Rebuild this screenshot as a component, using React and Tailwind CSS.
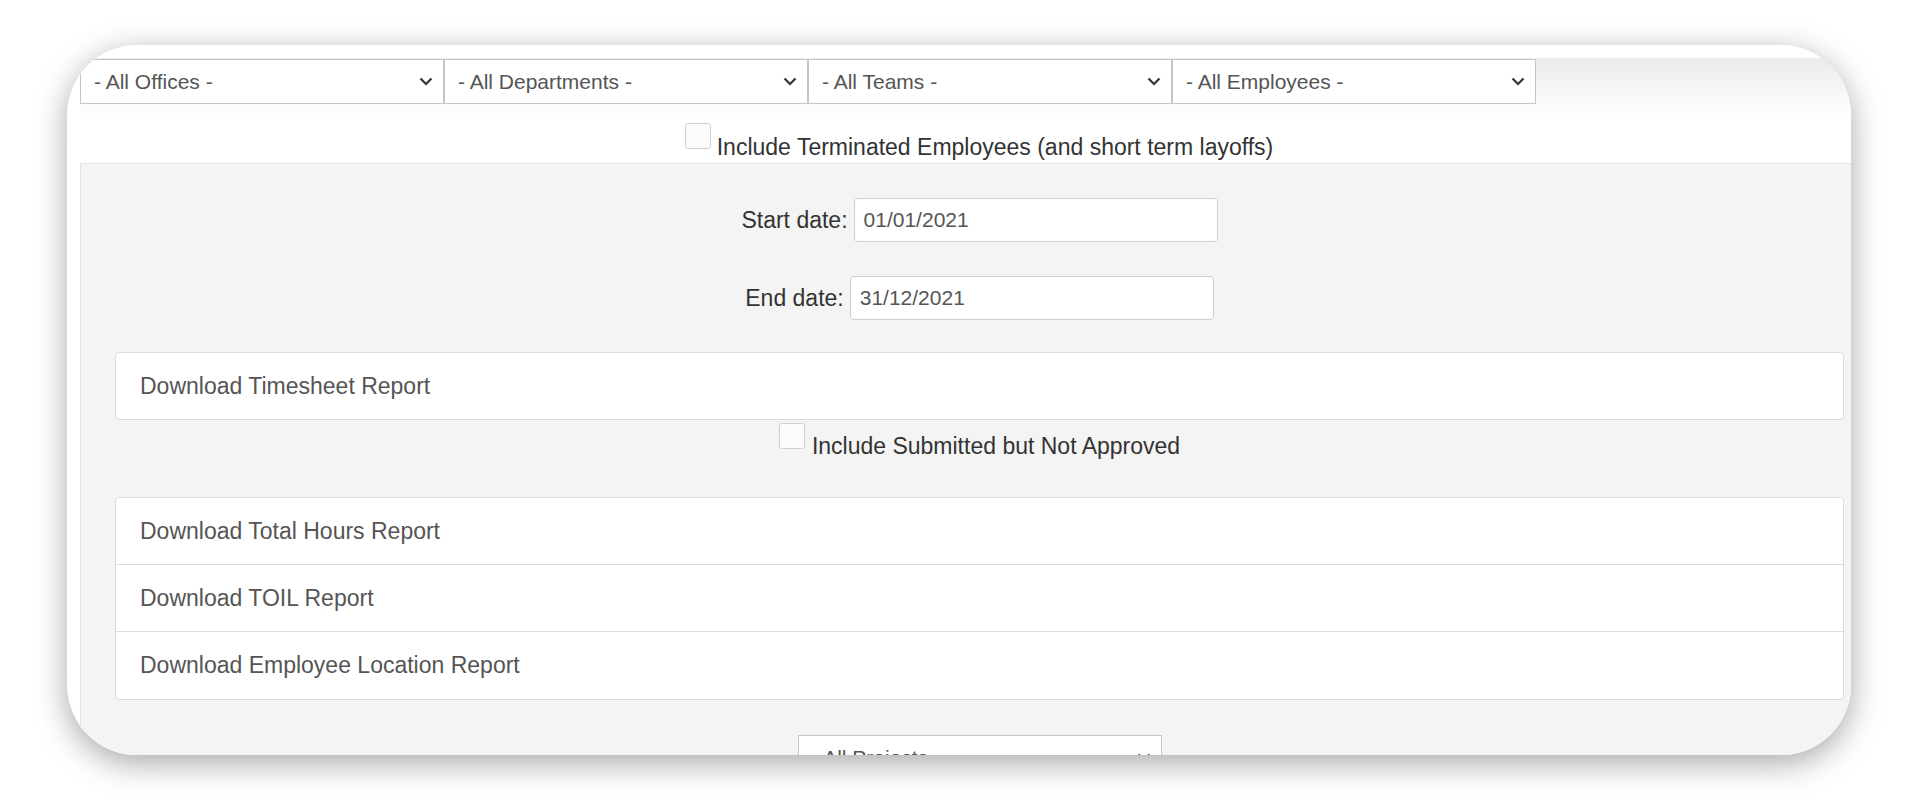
import React from "react";

const Chevron = () => (
  <svg width="14" height="9" viewBox="0 0 14 9" className="shrink-0">
    <path d="M1.5 1.5 L7 7 L12.5 1.5" fill="none" stroke="#333" strokeWidth="2.2" />
  </svg>
);

function Select({ label }) {
  return (
    <div className="w-[364px] h-[45px] shrink-0 border border-[#c6c6c6] bg-white flex items-center justify-between pl-[13px] pr-[10px] text-[21px] text-[#555]">
      <span>{label}</span>
      <Chevron />
    </div>
  );
}

function Checkbox({ className = "" }) {
  return (
    <div
      className={
        "w-[26px] h-[26px] shrink-0 border border-[#d0d0d0] rounded-[3px] bg-[#fbfbfb] " + className
      }
    />
  );
}

function DateRow({ label, value }) {
  return (
    <div className="flex justify-center items-center gap-[6px] h-[44px]">
      <span className="text-[23px] text-[#333]">{label}</span>
      <div className="w-[364px] h-[44px] border border-[#cfcfcf] rounded-[4px] bg-white flex items-center pl-[9px] text-[21px] text-[#555]">
        {value}
      </div>
    </div>
  );
}

export default function App() {
  return (
    <div className="w-[1920px] h-[800px] bg-white pl-[67px] pt-[45px] font-['Liberation_Sans',Arial,sans-serif]">
      <div className="w-[1784px] h-[710px] rounded-[70px] overflow-hidden bg-white shadow-[0_8px_32px_rgba(0,0,0,0.35)]">
        <div className="ml-[13px] mt-[13px] w-[1798px] pt-px bg-[linear-gradient(to_bottom,#ebebeb_0px,#ffffff_60px)]">
          <div className="flex">
            <Select label="- All Offices -" />
            <Select label="- All Departments -" />
            <Select label="- All Teams -" />
            <Select label="- All Employees -" />
          </div>
          <div className="h-[59px] flex justify-center items-start">
            <Checkbox className="mt-[19px]" />
            <span className="ml-[6px] mt-[30px] leading-[26px] text-[23px] text-[#333]">
              Include Terminated Employees (and short term layoffs)
            </span>
          </div>
          <div className="border-t border-l border-[#e3e3e3] bg-[#f4f4f4] px-[34px] pt-[34px] h-[700px]">
            <DateRow label="Start date:" value="01/01/2021" />
            <div className="mt-[34px]">
              <DateRow label="End date:" value="31/12/2021" />
            </div>
            <div className="mt-[32px] h-[68px] border border-[#dcdcdc] rounded-[4px] bg-white flex items-center px-[24px] text-[23px] text-[#555]">
              Download Timesheet Report
            </div>
            <div className="h-[77px] flex justify-center items-start">
              <Checkbox className="mt-[3px]" />
              <span className="ml-[7px] mt-[13px] leading-[26px] text-[23px] text-[#333]">
                Include Submitted but Not Approved
              </span>
            </div>
            <div className="border border-[#dcdcdc] rounded-[4px] bg-white divide-y divide-[#dcdcdc] text-[23px] text-[#555]">
              <div className="h-[67px] flex items-center px-[24px]">Download Total Hours Report</div>
              <div className="h-[67px] flex items-center px-[24px]">Download TOIL Report</div>
              <div className="h-[67px] flex items-center px-[24px]">Download Employee Location Report</div>
            </div>
            <div className="mt-[35px] flex justify-center">
              <Select label="- All Projects -" />
            </div>
          </div>
        </div>
      </div>
    </div>
  );
}
